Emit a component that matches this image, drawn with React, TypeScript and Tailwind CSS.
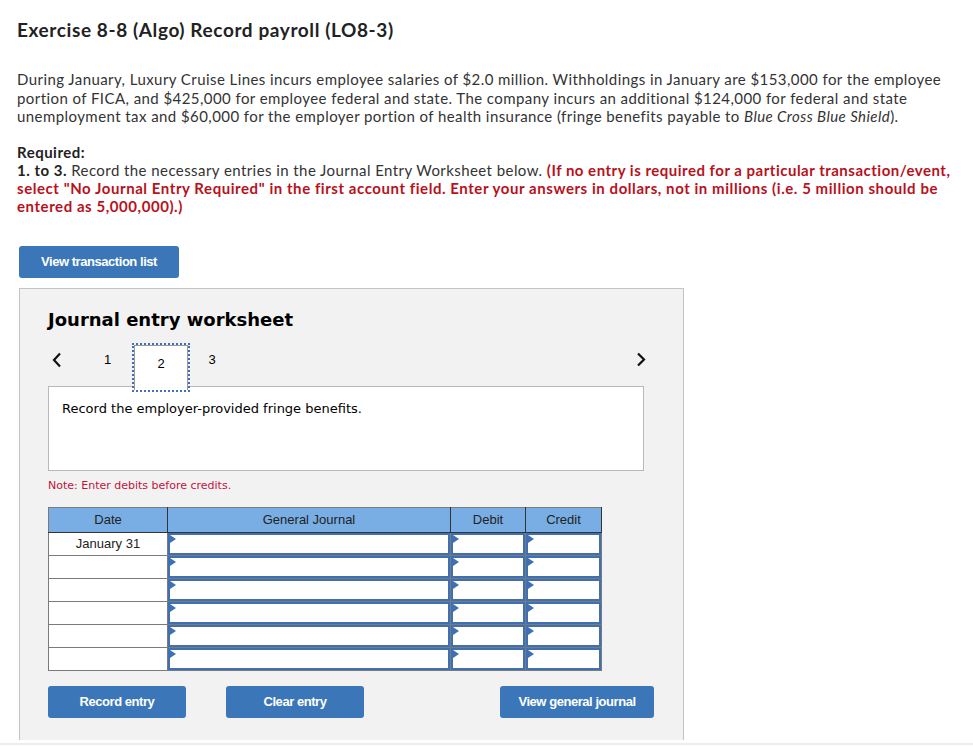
import React from "react";

const body = { fontFamily: "Lato, 'Open Sans', sans-serif" };
const verdana = { fontFamily: "'DejaVu Sans', Verdana, sans-serif" };
const arial = { fontFamily: "'Liberation Sans', Arial, sans-serif" };

function Btn({ children, w }: { children: React.ReactNode; w: string }) {
  return (
    <button
      className={`h-[32px] ${w} rounded-[3px] bg-[#3b77b8] text-white text-[13px] font-bold tracking-[-0.45px] flex items-center justify-center`}
      style={arial}
    >
      {children}
    </button>
  );
}

function InputCell({ w }: { w: string }) {
  return (
    <td className={`${w} p-0 border border-[#7a7a7a] h-[23px]`}>
      <div className="relative h-[22px] border-2 border-[#3e70b3] bg-white">
        <div className="absolute left-0 top-0 w-0 h-0 border-t-[4px] border-b-[4px] border-l-[6px] border-t-transparent border-b-transparent border-l-[#3e70b3]" />
      </div>
    </td>
  );
}

export default function App() {
  const rows = ["January 31", "", "", "", "", ""];
  return (
    <div className="w-[973px] h-[746px] overflow-hidden bg-white text-[#222]">
      <div className="pl-[17px] pt-[19px]">
        <h1 className="text-[19px] font-bold leading-[22px] tracking-[0.6px] text-[#222]" style={body}>
          Exercise 8-8 (Algo) Record payroll (LO8-3)
        </h1>
        <p className="mt-[29px] text-[15px] leading-[18.5px] tracking-[0.43px] whitespace-nowrap text-[#333]" style={body}>
          During January, Luxury Cruise Lines incurs employee salaries of $2.0 million. Withholdings in January are $153,000 for the employee
          <br />
          portion of FICA, and $425,000 for employee federal and state. The company incurs an additional $124,000 for federal and state
          <br />
          unemployment tax and $60,000 for the employer portion of health insurance (fringe benefits payable to <i>Blue Cross Blue Shield</i>).
        </p>
        <div className="mt-[17px] text-[15px] leading-[18px] whitespace-nowrap text-[#333]" style={body}>
          <div className="font-bold text-[#222] tracking-[0.5px]">Required:</div>
          <div className="tracking-[0.43px]">
            <b className="text-[#222] tracking-[0.5px]">1. to 3.</b> Record the necessary entries in the Journal Entry Worksheet below.{" "}
            <b className="text-[#b8111c] tracking-[0.5px]">(If no entry is required for a particular transaction/event,</b>
          </div>
          <div className="font-bold text-[#b8111c] tracking-[0.56px]">
            select "No Journal Entry Required" in the first account field. Enter your answers in dollars, not in millions (i.e. 5 million should be
          </div>
          <div className="font-bold text-[#b8111c] tracking-[0.56px]">entered as 5,000,000).)</div>
        </div>
        <div className="mt-[31px] pl-[2px]">
          <Btn w="w-[160px]">View transaction list</Btn>
        </div>
        <div className="mt-[10px] ml-[2px] w-[665px] h-[452px] bg-[#f2f2f2] border-x border-t border-[#c4c4c4] pl-[28px] pt-[19px]">
          <h2 className="text-[18px] font-bold leading-[24px] text-black" style={verdana}>
            Journal entry worksheet
          </h2>
          <div className="mt-[13px] w-[608px] h-[41px] flex items-start relative">
            <div className="w-[33px] h-[30px] flex items-center pl-[3px]">
              <svg width="12" height="16" viewBox="0 0 12 16">
                <path d="M9 1.5 L3 8 L9 14.5" fill="none" stroke="#111" strokeWidth="2.2" />
              </svg>
            </div>
            <div className="w-[53px] h-[30px] flex items-center justify-center text-[13px] text-black" style={arial}>1</div>
            <div className="relative z-10 w-[54px] h-[45px] -mb-[4px] bg-white border-x border-t border-[#9a9a9a] outline-2 outline-dotted outline-[#3e70b3] flex items-start justify-center pt-[8px] text-[13px] text-black" style={arial}>
              2
            </div>
            <div className="w-[48px] h-[30px] flex items-center justify-center text-[13px] text-black" style={arial}>3</div>
            <div className="flex-1" />
            <div className="w-[20px] h-[30px] flex items-center">
              <svg width="10" height="15" viewBox="0 0 10 15">
                <path d="M2 1.5 L8 7.5 L2 13.5" fill="none" stroke="#111" strokeWidth="2.2" />
              </svg>
            </div>
          </div>
          <div className="w-[596px] h-[85px] bg-white border border-[#b8b8b8] pl-[13px] pt-[12px] text-[13px] text-black" style={verdana}>
            Record the employer-provided fringe benefits.
          </div>
          <div className="mt-[8px] text-[11px] leading-[14px] text-[#c0143c]" style={verdana}>
            Note: Enter debits before credits.
          </div>
          <table className="mt-[14px] border-collapse w-[553px] table-fixed bg-white" style={arial}>
            <thead>
              <tr className="h-[25px] bg-[#78aee4] text-[13px] text-[#222] font-normal">
                <th className="w-[119px] font-normal border border-[#333] border-l-[#7a7a7a] border-t-[#7a7a7a]">Date</th>
                <th className="w-[283px] font-normal border border-[#333] border-t-[#7a7a7a]">General Journal</th>
                <th className="w-[75px] font-normal border border-[#333] border-t-[#7a7a7a]">Debit</th>
                <th className="w-[76px] font-normal border border-[#333] border-t-[#7a7a7a]">Credit</th>
              </tr>
            </thead>
            <tbody>
              {rows.map((d, i) => (
                <tr key={i} className="h-[23px]">
                  <td className="w-[119px] p-0 border border-[#7a7a7a] text-center text-[13px] text-[#222] leading-[22px] align-top">
                    {d}
                  </td>
                  <InputCell w="w-[283px]" />
                  <InputCell w="w-[75px]" />
                  <InputCell w="w-[76px]" />
                </tr>
              ))}
            </tbody>
          </table>
          <div className="mt-[15px] flex w-[606px]">
            <Btn w="w-[138px]">Record entry</Btn>
            <div className="w-[40px]" />
            <Btn w="w-[138px]">Clear entry</Btn>
            <div className="flex-1" />
            <Btn w="w-[154px]">View general journal</Btn>
          </div>
        </div>
      </div>
      <div className="mt-[3px] h-[2px] bg-[#ececec]" />
    </div>
  );
}
